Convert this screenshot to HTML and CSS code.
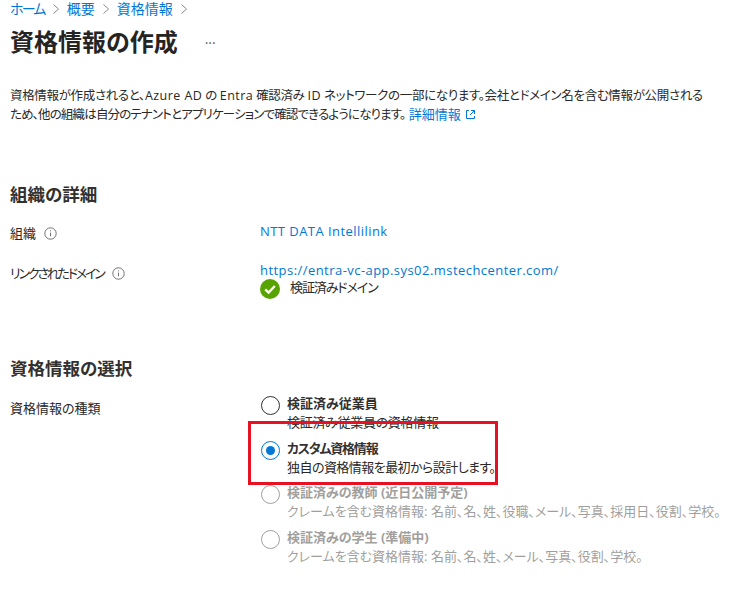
FILE: index.html
```html
<!DOCTYPE html>
<html lang="ja">
<head>
<meta charset="utf-8">
<title>資格情報の作成</title>
<link rel="stylesheet" href="styles.css">
</head>
<body>
<main class="page">
  <nav class="crumbs">
    <a class="home" href="#">ホーム</a><span class="chev"><svg width="8" height="12" viewBox="0 0 8 12"><path d="M1.5 1.5 6.5 6l-5 4.5" fill="none" stroke="#8a8886" stroke-width="1"/></svg></span>
    <a href="#">概要</a><span class="chev"><svg width="8" height="12" viewBox="0 0 8 12"><path d="M1.5 1.5 6.5 6l-5 4.5" fill="none" stroke="#8a8886" stroke-width="1"/></svg></span>
    <a href="#">資格情報</a><span class="chev"><svg width="8" height="12" viewBox="0 0 8 12"><path d="M1.5 1.5 6.5 6l-5 4.5" fill="none" stroke="#8a8886" stroke-width="1"/></svg></span>
  </nav>
  <header class="title-row">
    <h1>資格情報の作成</h1>
    <span class="more">···</span>
  </header>
  <p class="intro"><span class="line-a">資格情報が作成されると、<span class="lat">Azure AD</span> の <span class="lat">Entra</span> 確認済み <span class="lat">ID</span> ネットワークの一部になります。会社とドメイン名を含む情報が公開される</span><br><span class="line-b">ため、他の組織は自分のテナントとアプリケーションで確認できるようになります。</span> <a href="#">詳細情報</a> <svg class="ext" width="11" height="11" viewBox="0 0 11 11"><path d="M4 1.5H1.5v8h8V7M6 1.5h3.5V5M9.5 1.5 5 6" fill="none" stroke="#0078d4" stroke-width="1"/></svg></p>

  <h2 class="org-head">組織の詳細</h2>
  <div class="row row-org">
    <div class="label">組織<svg class="info" width="13" height="13" viewBox="0 0 13 13"><circle cx="6.5" cy="6.5" r="5.7" fill="none" stroke="#707070"/><path d="M6.5 5.6v3.7M6.5 3.4v1" stroke="#707070"/></svg></div>
    <div class="value"><a class="lat" href="#">NTT DATA Intellilink</a></div>
  </div>
  <div class="row row-domain">
    <div class="label"><span class="tight">リンクされたドメイン</span><svg class="info" width="13" height="13" viewBox="0 0 13 13"><circle cx="6.5" cy="6.5" r="5.7" fill="none" stroke="#707070"/><path d="M6.5 5.6v3.7M6.5 3.4v1" stroke="#707070"/></svg></div>
    <div class="value">
      <a class="lat" href="#">https://entra-vc-app.sys02.mstechcenter.com/</a>
      <div class="verified"><svg width="20" height="20" viewBox="0 0 20 20"><circle cx="10" cy="10" r="10" fill="#57a300"/><path d="M5.2 10.4 8.6 13.6 14.8 7" fill="none" stroke="#fff" stroke-width="2.4"/></svg><span>検証済みドメイン</span></div>
    </div>
  </div>

  <h2 class="cred-head">資格情報の選択</h2>
  <div class="row row-cred">
    <div class="label">資格情報の種類</div>
    <div class="options">
      <div class="option"><span class="radio"></span><div><strong>検証済み従業員</strong><p class="sub-a">検証済み従業員の資格情報</p></div></div>
      <div class="option"><span class="radio on"></span><div><strong class="custom">カスタム資格情報</strong><p class="sub-b">独自の資格情報を最初から設計します。</p></div></div>
      <div class="option off"><span class="radio"></span><div><strong>検証済みの教師 (近日公開予定)</strong><p>クレームを含む資格情報: 名前、名、姓、役職、メール、写真、採用日、役割、学校。</p></div></div>
      <div class="option off"><span class="radio"></span><div><strong>検証済みの学生 (準備中)</strong><p>クレームを含む資格情報: 名前、名、姓、メール、写真、役割、学校。</p></div></div>
    </div>
  </div>
</main>
<div class="highlight"></div>
</body>
</html>
```

FILE: styles.css
```css
* { box-sizing: border-box; }
html, body { margin: 0; padding: 0; background: #fff; }
body {
  height: 589px;
  overflow: hidden;
  position: relative;
  font-family: "Open Sans", "Noto Sans CJK JP", sans-serif;
  font-size: 13px;
  font-feature-settings: "palt";
  color: #292827;
}
a { color: #0078d4; text-decoration: none; }
.lat { letter-spacing: .45px; }
.page { padding: 0 0 0 10px; }
.crumbs { display: flex; align-items: center; height: 18px; font-size: 14px; line-height: 18px; }
.home { letter-spacing: -1.8px; }
.chev { display: flex; margin: 0 7px 0 7px; }
.chev:last-child { margin-right: 0; }
.title-row { display: flex; align-items: center; height: 32px; margin-top: 8px; }
h1 { margin: 0; font-size: 24px; font-weight: 700; line-height: 32px; color: #252423; }
.more { margin-left: 27px; font-size: 14px; color: #605e5c; }
.intro { margin: 29px 0 0; font-size: 12.5px; line-height: 18px; white-space: nowrap; }
.intro a { font-size: 13px; }
.line-a { letter-spacing: -.33px; }
.line-a .lat { letter-spacing: .45px; }
.line-b { letter-spacing: -.85px; }
.ext { vertical-align: -1px; margin-left: 1px; }
h2 { margin: 0; font-size: 17.5px; font-weight: 700; line-height: 24px; color: #323130; }
.org-head { margin-top: 58px; }
.cred-head { margin-top: 57px; }
.row { display: flex; }
.row-org { margin-top: 16px; }
.row-domain { margin-top: 19px; }
.row-cred { margin-top: 19px; }
.label { width: 250px; flex: none; line-height: 18px; display: flex; align-items: center; height: 18px; }
.row-org .label { margin-top: 2px; }
.row-domain .label { margin-top: 3px; }
.tight { letter-spacing: -2.2px; }
.info { margin-left: 8px; }
.value { line-height: 18px; }
.verified { display: flex; align-items: flex-start; }
.verified span { margin-left: 10px; line-height: 16px; letter-spacing: -1.1px; }
.options { display: flex; flex-direction: column; margin-top: -5px; }
.option { display: flex; gap: 7px; height: 44.5px; white-space: nowrap; }
.option strong { display: block; font-weight: 700; line-height: 19px; color: #323130; }
.option strong.custom { letter-spacing: -1.2px; }
.option p { margin: 0; line-height: 18px; }
.option p.sub-a { letter-spacing: -.3px; }
.option p.sub-b { letter-spacing: -.55px; }
.radio { width: 19px; height: 19px; margin: 2px 0 0 1px; border-radius: 50%; border: 1px solid #323130; flex: none; position: relative; background: #fff; }
.radio.on { border-color: #0078d4; }
.radio.on::after { content: ""; position: absolute; left: 4px; top: 4px; width: 9px; height: 9px; border-radius: 50%; background: #0078d4; }
.off .radio { border-color: #a19f9d; }
.off strong, .off p { color: #a19f9d; }
.highlight { position: absolute; left: 248px; top: 421px; width: 250px; height: 64px; border: 3px solid #e81123; pointer-events: none; }
```
